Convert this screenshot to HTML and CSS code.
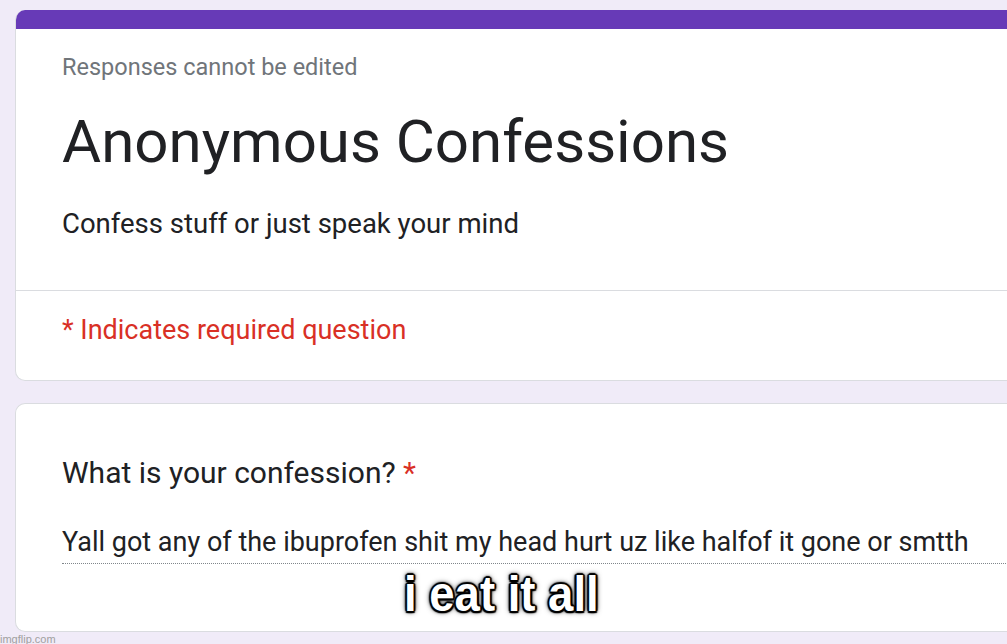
FILE: index.html
```html
<!DOCTYPE html>
<html>
<head>
<meta charset="utf-8">
<link rel="stylesheet" href="styles.css">
</head>
<body>
<div class="page">
  <section class="card header-card">
    <div class="band"></div>
    <div class="header-main">
      <div class="note">Responses cannot be edited</div>
      <h1 class="title">Anonymous Confessions</h1>
      <div class="desc">Confess stuff or just speak your mind</div>
    </div>
    <div class="required-row">
      <span class="required">* Indicates required question</span>
    </div>
  </section>
  <section class="card question-card">
    <div class="question">What is your confession? <span class="star">*</span></div>
    <div class="answer"><span class="answer-text">Yall got any of the ibuprofen shit my head hurt uz like halfof it gone or smtth</span></div>
    <div class="caption-row"><span class="caption">i eat it all</span></div>
  </section>
  <div class="watermark">imgflip.com</div>
</div>
</body>
</html>
```
FILE: styles.css
```css
html, body {
  margin: 0;
  padding: 0;
  background: #f0ebf8;
  width: 1007px;
  height: 644px;
  overflow: hidden;
}
.page {
  padding: 10px 0 0 15px;
  font-family: Roboto, "Liberation Sans", sans-serif;
  color: #202124;
  display: flex;
  flex-direction: column;
}
.card {
  background: #fff;
  border: 1px solid #dadce0;
  border-right: none;
  border-radius: 10px 0 0 10px;
  width: 992px;
  box-sizing: border-box;
}
.header-card {
  height: 371px;
  border-top: none;
  overflow: hidden;
  display: flex;
  flex-direction: column;
}
.band {
  height: 19px;
  flex: none;
  background: #673ab7;
}
.header-main {
  padding: 0 0 0 46px;
  height: 262px;
  flex: none;
  border-bottom: 1px solid #dadce0;
  box-sizing: border-box;
  display: flex;
  flex-direction: column;
}
.note {
  margin-top: 23px;
  font-size: 23.5px;
  line-height: 30px;
  color: #70757a;
}
.title {
  margin: 28px 0 0;
  font-weight: 400;
  font-size: 60px;
  line-height: 64px;
}
.desc {
  margin-top: 34px;
  font-size: 27.5px;
  line-height: 32px;
}
.required-row {
  padding: 23px 0 0 46px;
}
.required {
  font-size: 27px;
  line-height: 32px;
  color: #d93025;
}
.question-card {
  margin-top: 22px;
  height: 229px;
  padding: 51px 0 0 46px;
  display: flex;
  flex-direction: column;
}
.question {
  font-size: 30px;
  line-height: 36px;
}
.star {
  color: #d93025;
}
.answer {
  margin-top: 35px;
  width: 946px;
  border-bottom: 1px dotted #80868b;
  padding-bottom: 5px;
}
.answer-text {
  font-size: 27px;
  line-height: 32px;
  white-space: nowrap;
}
.caption-row {
  margin-top: 3px;
  padding-left: 342px;
}
.caption {
  display: inline-block;
  transform: scaleX(0.91);
  transform-origin: left center;
  font-family: "Liberation Sans", Arial, sans-serif;
  font-weight: 700;
  font-size: 50px;
  line-height: 54px;
  color: #fff;
  text-shadow: 1.5px 1.5px 1px #000, -1.5px -1.5px 1px #000, 1.5px -1.5px 1px #000, -1.5px 1.5px 1px #000, 0 2px 1px #000, 0 -2px 1px #000, 2px 0 1px #000, -2px 0 1px #000, 0 0 5px #000, 0 0 7px #333;
}
.watermark {
  margin: 1px 0 0 -15px;
  font-family: "Liberation Sans", Arial, sans-serif;
  font-size: 11px;
  color: #a0a0a0;
}
```
